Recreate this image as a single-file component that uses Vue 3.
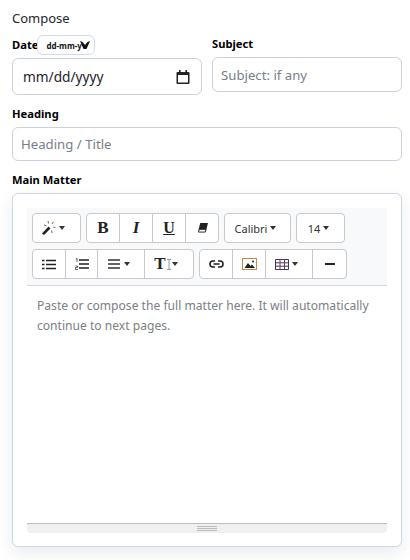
<script setup>
const placeholder = 'Paste or compose the full matter here. It will automatically continue to next pages.'
</script>

<template>
  <div class="page">
    <div class="title">Compose</div>
    <div class="two">
      <div class="field">
        <div class="date-label"><span class="label">Date</span><span class="fmt">dd-mm-y<svg class="fmt-arrow" width="10" height="8" viewBox="0 0 10 8"><path d="M0 0l2.500 1L5 4l2.500-3L10 0 6.500 8h-3z" fill="#111"/></svg></span></div>
        <div class="box date">
          <span>mm/dd/yyyy</span>
          <svg width="14" height="14" viewBox="0 0 14 14"><path d="M3 0h1.600v2h4.800V0H11v2h1.500c.5 0 1 .5 1 1v10c0 .5-.5 1-1 1h-11c-.5 0-1-.5-1-1V3c0-.5.5-1 1-1H3zM2 5v7.500h10V5z" fill="#222"/></svg>
        </div>
      </div>
      <div class="field">
        <div class="label subj">Subject</div>
        <div class="box input subj-box">Subject: if any</div>
      </div>
    </div>
    <div class="label head">Heading</div>
    <div class="box input head-box">Heading / Title</div>
    <div class="label main">Main Matter</div>
    <div class="card">
      <div class="toolbar">
        <div class="row">
          <div class="group">
            <div class="btn w48 off6">
              <svg width="14" height="14" viewBox="0 0 14 14"><path d="M0 12.500l6.500-7 2 2-6.500 6.500z" fill="#222"/><path d="M6 0l.6 2.500M11.500 1l-1.500 2M2 4l2.500.8M13.500 6.500l-2.500-.5M9.500 9.500l.7 2.500" stroke="#8a7a55" stroke-width="1.100"/></svg>
              <i class="caret"></i>
            </div>
          </div>
          <div class="group">
            <div class="btn w33 serif b">B</div>
            <div class="btn w33 serif it">I</div>
            <div class="btn w33 serif u">U</div>
            <div class="btn w32">
              <svg width="11" height="10" viewBox="0 0 12 11"><path d="M3.500 0H12l-2 8.500H1.500L2 6z" fill="#222"/><path d="M2.300 7h7.200l-.4 3H1.600z" fill="#fff" stroke="#222"/></svg>
            </div>
          </div>
          <div class="group">
            <div class="btn w67 txt off3">Calibri<i class="caret"></i></div>
          </div>
          <div class="group">
            <div class="btn w49 txt off3">14<i class="caret"></i></div>
          </div>
        </div>
        <div class="row">
          <div class="group">
            <div class="btn w33">
              <svg width="14" height="11" viewBox="0 0 14 11"><path d="M4 1.500h10M4 5.500h10M4 9.500h10M0 1.500h2.500M0 5.500h2.500M0 9.500h2.500" stroke="#222" stroke-width="1.700"/></svg>
            </div>
            <div class="btn w32">
              <svg width="14" height="12" viewBox="0 0 14 12"><path d="M4 2h10M4 6h10M4 10h10" stroke="#222" stroke-width="1.700"/><path d="M.8 1L2 .5V4M.5 8h2v1.500H.5V11.500h2.500" stroke="#334" stroke-width=".8" fill="none"/></svg>
            </div>
            <div class="btn w48 off4">
              <svg width="13" height="10" viewBox="0 0 13 10"><path d="M0 1h12M0 5h12M0 9h12" stroke="#333" stroke-width="1.600"/></svg>
              <i class="caret"></i>
            </div>
            <div class="btn w48x off6">
              <span class="serif t">T</span><svg width="4" height="11" viewBox="0 0 4 11"><path d="M0 .5h4M0 10.500h4M2 .5v10" stroke="#889" stroke-width=".9"/></svg>
              <i class="caret tight"></i>
            </div>
          </div>
          <div class="group">
            <div class="btn w33">
              <svg width="15" height="8" viewBox="0 0 15 8"><path d="M6 1H4a3 3 0 000 6h2M9 1h2a3 3 0 010 6H9M4.500 4h6" stroke="#222" stroke-width="1.600" fill="none"/></svg>
            </div>
            <div class="btn w33">
              <svg width="15" height="12" viewBox="0 0 15 12"><rect x=".5" y=".5" width="14" height="11" fill="#fff" stroke="#c08a50"/><path d="M2.500 10l3.500-5 2.500 3 1.500-1.500 3 3.500z" fill="#222"/><circle cx="11" cy="3.500" r="1" fill="#223"/></svg>
            </div>
            <div class="btn w48 off5">
              <svg width="14" height="11" viewBox="0 0 14 11"><path d="M.5.500h13v10H.5zM.5 3.800h13M.5 7.200h13" stroke="#3a3560" fill="none"/><path d="M5 .5v10M9.500.5v10" stroke="#7a3550" fill="none"/></svg>
              <i class="caret"></i>
            </div>
            <div class="btn w33"><span class="dash"></span></div>
          </div>
        </div>
      </div>
      <div class="editor">{{ placeholder }}</div>
      <div class="status"><span class="grip"></span></div>
    </div>
  </div>
</template>

<style>
body { background: #fff; }
</style>

<style scoped>
.page {
  width: 410px;
  height: 560px;
  box-sizing: border-box;
  padding: 10px 8px 0 12px;
  font-family: "Noto Sans", "Open Sans", sans-serif;
  color: #212529;
  overflow: hidden;
}
.title { font-size: 13px; line-height: 16px; color: #1c2530; }
.two { display: grid; grid-template-columns: 190px 190px; gap: 10px; }
.field { display: flex; flex-direction: column; }
.label { font-size: 11.200px; font-weight: 700; color: #000; line-height: 16px; }
.date-label { display: flex; align-items: center; height: 20px; margin-top: 9px; }
.fmt {
  display: flex;
  align-items: center;
  width: 58px;
  height: 20px;
  box-sizing: border-box;
  margin-left: -1px;
  padding-left: 8px;
  border: 1px solid #d3dbe6;
  border-radius: 6px;
  background: #fff;
  font-size: 8px;
  font-weight: 700;
  color: #111;
  white-space: nowrap;
  overflow: hidden;
}
.fmt-arrow { margin-left: -2px; flex: none; }
.box {
  box-sizing: border-box;
  border: 1px solid #c9d3e0;
  border-radius: 6px;
  background: #fff;
  display: flex;
  align-items: center;
}
.date {
  height: 37px;
  margin-top: 3px;
  padding: 0 11px 0 10px;
  justify-content: space-between;
  font-size: 13.700px;
  color: #212529;
}
.subj { margin-top: 10px; }
.subj-box { height: 35px; margin-top: 5px; }
.input { padding: 0 8px; font-size: 13.200px; color: #7a8088; }
.head { margin-top: 11px; }
.head-box { width: 390px; height: 34px; margin-top: 5px; }
.main { margin-top: 11px; }
.card {
  width: 390px;
  height: 354px;
  margin-top: 5px;
  box-sizing: border-box;
  padding: 14px 14px 13px;
  border: 1px solid #cdd6e2;
  border-radius: 6px;
  background: #fff;
  box-shadow: 0 6px 16px rgba(20, 30, 50, 0.09);
  display: flex;
  flex-direction: column;
}
.toolbar {
  height: 78px;
  box-sizing: border-box;
  padding: 5px 5px 0;
  background: #f8f9fb;
  border-bottom: 1px solid #d6d8db;
  display: flex;
  flex-direction: column;
  gap: 6px;
  flex: none;
}
.row { display: flex; gap: 5px; }
.group {
  display: flex;
  height: 30px;
  box-sizing: border-box;
  background: #fff;
  border: 1px solid #c9c9c9;
  border-radius: 4px;
}
.btn {
  display: flex;
  align-items: center;
  justify-content: center;
  box-sizing: border-box;
  height: 100%;
  border-right: 1px solid #c9c9c9;
  color: #333;
}
.btn:last-child { border-right: 0; }
.w32 { width: 32px; }
.w33 { width: 33px; }
.w48 { width: 47px; }
.w48x { width: 48px; }
.w49 { width: 47px; }
.w67 { width: 65px; }
.off3 { padding-right: 4px; }
.off4 { padding-right: 4px; }
.off5 { padding-right: 5px; }
.off6 { padding-right: 6px; }
.caret {
  display: inline-block;
  width: 0;
  height: 0;
  margin-left: 3px;
  border-left: 3px solid transparent;
  border-right: 3px solid transparent;
  border-top: 4px solid #333;
}
.caret.tight { margin-left: 1px; }
.serif { font-family: "Liberation Serif", serif; font-size: 17px; color: #222; }
.b, .t { font-weight: 700; }
.it { font-style: italic; font-weight: 700; }
.u { text-decoration: underline; font-weight: 700; font-size: 16px; }
.txt { font-size: 11px; color: #333; }
.t { font-size: 17px; margin-right: 1px; }
.dash { width: 10px; height: 2px; background: #222; }
.editor {
  flex: 1;
  padding: 10px 10px;
  font-size: 12.100px;
  line-height: 20px;
  color: #7b8084;
}
.status {
  flex: none;
  background: #f0f0f0;
  border-top: 1px solid #bdbdbd;
  border-radius: 0 0 4px 4px;
  display: flex;
  justify-content: center;
  height: 7px;
  padding-top: 2px;
}
.grip {
  width: 20px;
  height: 3px;
  border-top: 1px solid #bbb;
  border-bottom: 1px solid #bbb;
  background: linear-gradient(#bbb, #bbb) center / 100% 1px no-repeat;
}
</style>
